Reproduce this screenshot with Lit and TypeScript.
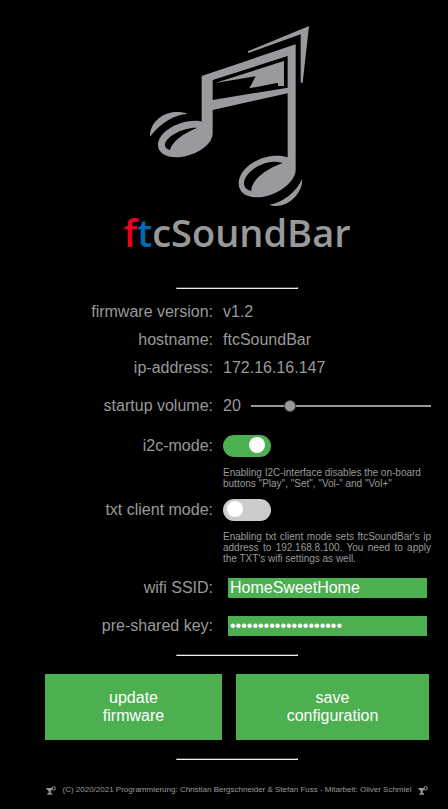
import { LitElement, html, svg, css } from "lit";
import { customElement, state } from "lit/decorators.js";

const glass = html`<svg class="glass" viewBox="0 0 30 27" aria-hidden="true">
  <path d="M1 6H20V9L14 15V22H18V26H4V22H8V15L1 9Z" fill="currentColor" />
  <circle cx="23" cy="7" r="5" fill="none" stroke="currentColor" stroke-width="3" />
</svg>`;

const note = svg`
  <path d="M323 109L507 33L488 203H482V58L325 114Z" />
  <path fill-rule="evenodd" d="M185 183L467 88V465C467 500 410 547 350 547C315 547 296 530 296 505C296 465 350 422 410 422C425 422 436 424 443 427V235L218 285V355C218 395 155 427 110 427C75 427 54 412 54 390C54 350 115 317 165 317C175 317 181 318 185 320Z
    M218 195V255L443 218V123Z
    M172 338C130 336 75 365 75 390C75 398 81 403 90 405C95 380 130 355 172 338Z
    M428 444C420 441 410 440 400 440C355 442 312 478 312 505C312 518 322 526 334 528C332 500 370 465 428 444Z" />
  <path d="M225 204L432 138V213H414V203L328 220L347 184Z" />
  <path d="M30 365C30 320 70 291 110 291C122 291 135 293 143 296C100 300 60 325 30 365Z" />
  <path d="M486 492C490 530 450 573 410 573C402 573 395 572 389 569C430 562 470 530 486 492Z" />`;

@customElement("app-root")
export class AppRoot extends LitElement {
  @state() private volume = 20;

  static styles = css`
    :host {
      display: block;
      box-sizing: border-box;
      min-height: 100vh;
      padding: 15px 7px 8px 33px;
      background: #000;
      color: #999;
      font: 16px/18px "Liberation Sans", Arial, sans-serif;
    }
    .logo {
      display: flex;
      flex-direction: column;
      align-items: center;
    }
    .note {
      width: 194px;
      height: 200px;
      fill: #9b999e;
    }
    .name {
      margin: 0;
      font: 600 38px/34px "Open Sans", "Noto Sans", sans-serif;
      color: #999;
    }
    .f {
      color: #e8001c;
    }
    .t {
      color: #0068b4;
    }
    hr {
      width: 120px;
      margin: 0 auto;
      border: 1px inset #eee;
      border-color: #9a9a9a #eee #eee #9a9a9a;
    }
    .logo + hr {
      margin-top: 38px;
      margin-bottom: 9px;
    }
    .row {
      display: grid;
      grid-template-columns: 180fr 208fr;
      column-gap: 10px;
      align-items: center;
      min-height: 28px;
      padding-right: 10px;
    }
    .label {
      text-align: right;
    }
    .volume {
      display: flex;
      align-items: center;
      gap: 10px;
    }
    .row.slide {
      margin: 10px 0 15px;
    }
    .range {
      appearance: none;
      flex: 1;
      min-width: 0;
      height: 12px;
      margin: 0;
      background: linear-gradient(#999, #999) center / 100% 2px no-repeat;
    }
    .range::-webkit-slider-thumb {
      appearance: none;
      box-sizing: border-box;
      width: 12px;
      height: 12px;
      border: 1px solid #444;
      border-radius: 50%;
      background: #999;
    }
    .row.toggle {
      min-height: 22px;
    }
    .toggle + .toggle {
      margin-top: 5px;
    }
    .switch {
      appearance: none;
      display: block;
      box-sizing: border-box;
      width: 48px;
      height: 22px;
      margin: 0;
      padding: 2px 4px 4px;
      border-radius: 11px;
      background: #ccc;
    }
    .switch::before {
      content: "";
      display: block;
      width: 16px;
      height: 16px;
      border-radius: 50%;
      background: #fff;
    }
    .switch:checked {
      padding-left: 26px;
      padding-right: 6px;
      background: #4caf50;
    }
    .hint {
      grid-column: 2;
      margin: 10px 0 5px;
      font-size: 10px;
      line-height: 11px;
    }
    .justified {
      text-align: justify;
    }
    .row.field {
      min-height: 38px;
    }
    .text {
      box-sizing: border-box;
      width: auto;
      min-width: 0;
      height: 20px;
      margin: 0 4px 0 5px;
      padding: 0 2px;
      border: 0;
      background: #4caf50;
      color: #fff;
      font: inherit;
    }
    .fields {
      margin-bottom: 9px;
    }
    .buttons {
      display: grid;
      grid-template-columns: 177fr 193fr;
      gap: 14px;
      margin: 18px 12px;
    }
    .button {
      padding: 15px 48px;
      border: 0;
      background: #4caf50;
      color: #fff;
      font: inherit;
    }
    .footer {
      display: flex;
      justify-content: center;
      align-items: center;
      gap: 6px;
      margin-top: 24px;
      font-size: 8px;
      line-height: 12px;
    }
    .glass {
      width: 10px;
      height: 9px;
    }
  `;

  private onVolume(e: Event) {
    this.volume = Number((e.target as HTMLInputElement).value);
  }

  render() {
    return html`
      <header class="logo">
        <svg class="note" viewBox="0 0 582 600" aria-hidden="true">${note}</svg>
        <h1 class="name"><span class="f">f</span><span class="t">t</span>cSoundBar</h1>
      </header>
      <hr />
      <div class="row"><span class="label">firmware version:</span><span>v1.2</span></div>
      <div class="row"><span class="label">hostname:</span><span>ftcSoundBar</span></div>
      <div class="row"><span class="label">ip-address:</span><span>172.16.16.147</span></div>
      <div class="row slide">
        <label class="label" for="volume">startup volume:</label>
        <div class="volume">
          <output for="volume">${this.volume}</output>
          <input class="range" id="volume" type="range" min="0" max="100" .value=${String(this.volume)} @input=${this.onVolume} />
        </div>
      </div>
      <div class="row toggle">
        <label class="label" for="i2c">i2c-mode:</label>
        <input class="switch" id="i2c" type="checkbox" checked />
        <p class="hint">Enabling I2C-interface disables the on-board buttons "Play", "Set", "Vol-" and "Vol+"</p>
      </div>
      <div class="row toggle">
        <label class="label" for="txt">txt client mode:</label>
        <input class="switch" id="txt" type="checkbox" />
        <p class="hint justified">Enabling txt client mode sets ftcSoundBar's ip address to 192.168.8.100. You need to apply the TXT's wifi settings as well.</p>
      </div>
      <div class="fields">
        <div class="row field">
          <label class="label" for="ssid">wifi SSID:</label>
          <input class="text" id="ssid" type="text" value="HomeSweetHome" />
        </div>
        <div class="row field">
          <label class="label" for="key">pre-shared key:</label>
          <input class="text" id="key" type="password" value="01234567890123456789" />
        </div>
      </div>
      <hr />
      <div class="buttons">
        <button class="button" type="button">update<br />firmware</button>
        <button class="button" type="button">save<br />configuration</button>
      </div>
      <hr />
      <footer class="footer">
        ${glass}<span>(C) 2020/2021 Programmierung: Christian Bergschneider &amp; Stefan Fuss - Mitarbeit: Oliver Schmiel</span>${glass}
      </footer>
    `;
  }
}
